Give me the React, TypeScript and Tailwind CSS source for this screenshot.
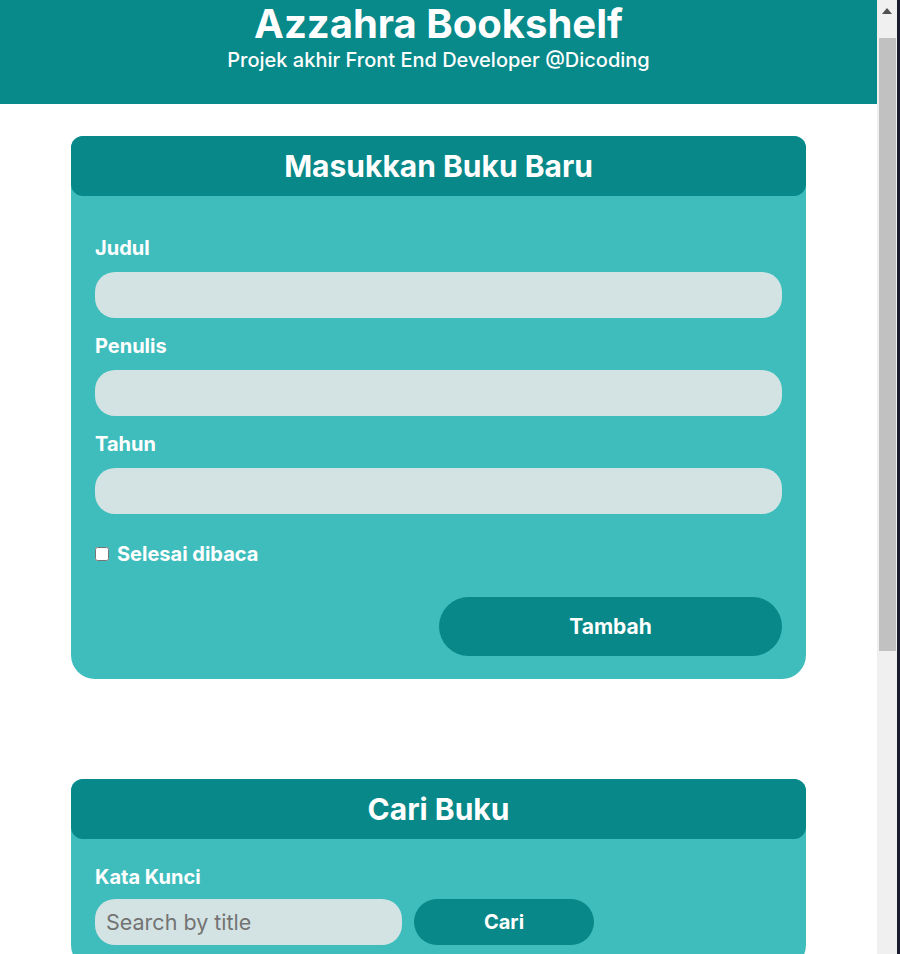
import { useState } from "react";

function CardHeader({ title }: { title: string }) {
  return (
    <div className="h-[60px] rounded-[12px] bg-[#088888] flex items-center justify-center">
      <h2 className="text-[30px] font-bold text-white leading-none">{title}</h2>
    </div>
  );
}

function Field({ label, type = "text" }: { label: string; type?: string }) {
  return (
    <div className="flex flex-col">
      <label className="text-[20px] font-bold text-white leading-[24px] mb-3">{label}</label>
      <input
        type={type}
        className="h-[46px] w-full rounded-[20px] bg-[#d3e3e3] px-3 text-[20px] text-gray-800 outline-none"
      />
    </div>
  );
}

function Scrollbar() {
  return (
    <div className="w-[20px] h-full bg-[#f0f0f0] flex flex-col">
      <div className="h-[38px] flex justify-center pt-[8px]">
        <svg width="10" height="6" viewBox="0 0 10 6">
          <polygon points="5,0 10,6 0,6" fill="#505050" />
        </svg>
      </div>
      <div className="ml-[2px] mr-[1px] h-[613px] bg-[#c1c1c1]" />
    </div>
  );
}

export default function App() {
  const [done, setDone] = useState(false);

  return (
    <div className="h-screen flex overflow-hidden bg-white">
      <main className="flex-1 h-full overflow-hidden font-['Inter',sans-serif]">
        <div className="pb-[65px]">
          <header className="h-[104px] bg-[#08898a] flex flex-col items-center text-white">
            <h1 className="text-[40px] font-bold leading-[48px]">Azzahra Bookshelf</h1>
            <p className="text-[20px] font-medium leading-[24px]">
              Projek akhir Front End Developer @Dicoding
            </p>
          </header>

          <section className="w-[735px] mx-auto mt-8 rounded-t-[12px] rounded-b-[24px] bg-[#3fbdbd]">
            <CardHeader title="Masukkan Buku Baru" />
            <form className="px-6 pt-10 pb-[23px] flex flex-col" onSubmit={(e) => e.preventDefault()}>
              <div className="flex flex-col gap-4">
                <Field label="Judul" />
                <Field label="Penulis" />
                <Field label="Tahun" type="number" />
              </div>
              <div className="mt-7 flex items-center gap-2 h-6">
                <input
                  type="checkbox"
                  checked={done}
                  onChange={(e) => setDone(e.target.checked)}
                  className="w-[14px] h-[14px]"
                />
                <span className="text-[20px] font-bold text-white">Selesai dibaca</span>
              </div>
              <div className="mt-[31px] flex justify-end">
                <button
                  type="submit"
                  className="w-[343px] h-[59px] rounded-[30px] bg-[#088888] text-white text-[21px] font-bold"
                >
                  Tambah
                </button>
              </div>
            </form>
          </section>

          <section className="w-[735px] mx-auto mt-[100px] rounded-t-[12px] rounded-b-[24px] bg-[#3fbdbd]">
            <CardHeader title="Cari Buku" />
            <form className="px-6 pt-[26px] pb-6 flex flex-col" onSubmit={(e) => e.preventDefault()}>
              <label className="text-[20px] font-bold text-white leading-[24px] mb-[10px]">Kata Kunci</label>
              <div className="flex gap-3">
                <input
                  type="text"
                  placeholder="Search by title"
                  className="w-[307px] h-[46px] rounded-[20px] bg-[#d3e3e3] px-[11px] text-[21.5px] text-gray-800 placeholder:text-[#737373] outline-none"
                />
                <button className="w-[180px] h-[46px] rounded-[23px] bg-[#088888] text-white text-[20px] font-bold">
                  Cari
                </button>
              </div>
            </form>
          </section>

          <section className="w-[735px] mx-auto mt-[100px] rounded-t-[12px] rounded-b-[24px] bg-[#3fbdbd] pb-10">
            <CardHeader title="Belum selesai dibaca" />
          </section>

          <section className="w-[735px] mx-auto mt-[100px] rounded-t-[12px] rounded-b-[24px] bg-[#3fbdbd] pb-10">
            <CardHeader title="Selesai dibaca" />
          </section>
        </div>
      </main>
      <Scrollbar />
      <div className="w-[3px] h-full bg-[#1b1d2e]" />
    </div>
  );
}
